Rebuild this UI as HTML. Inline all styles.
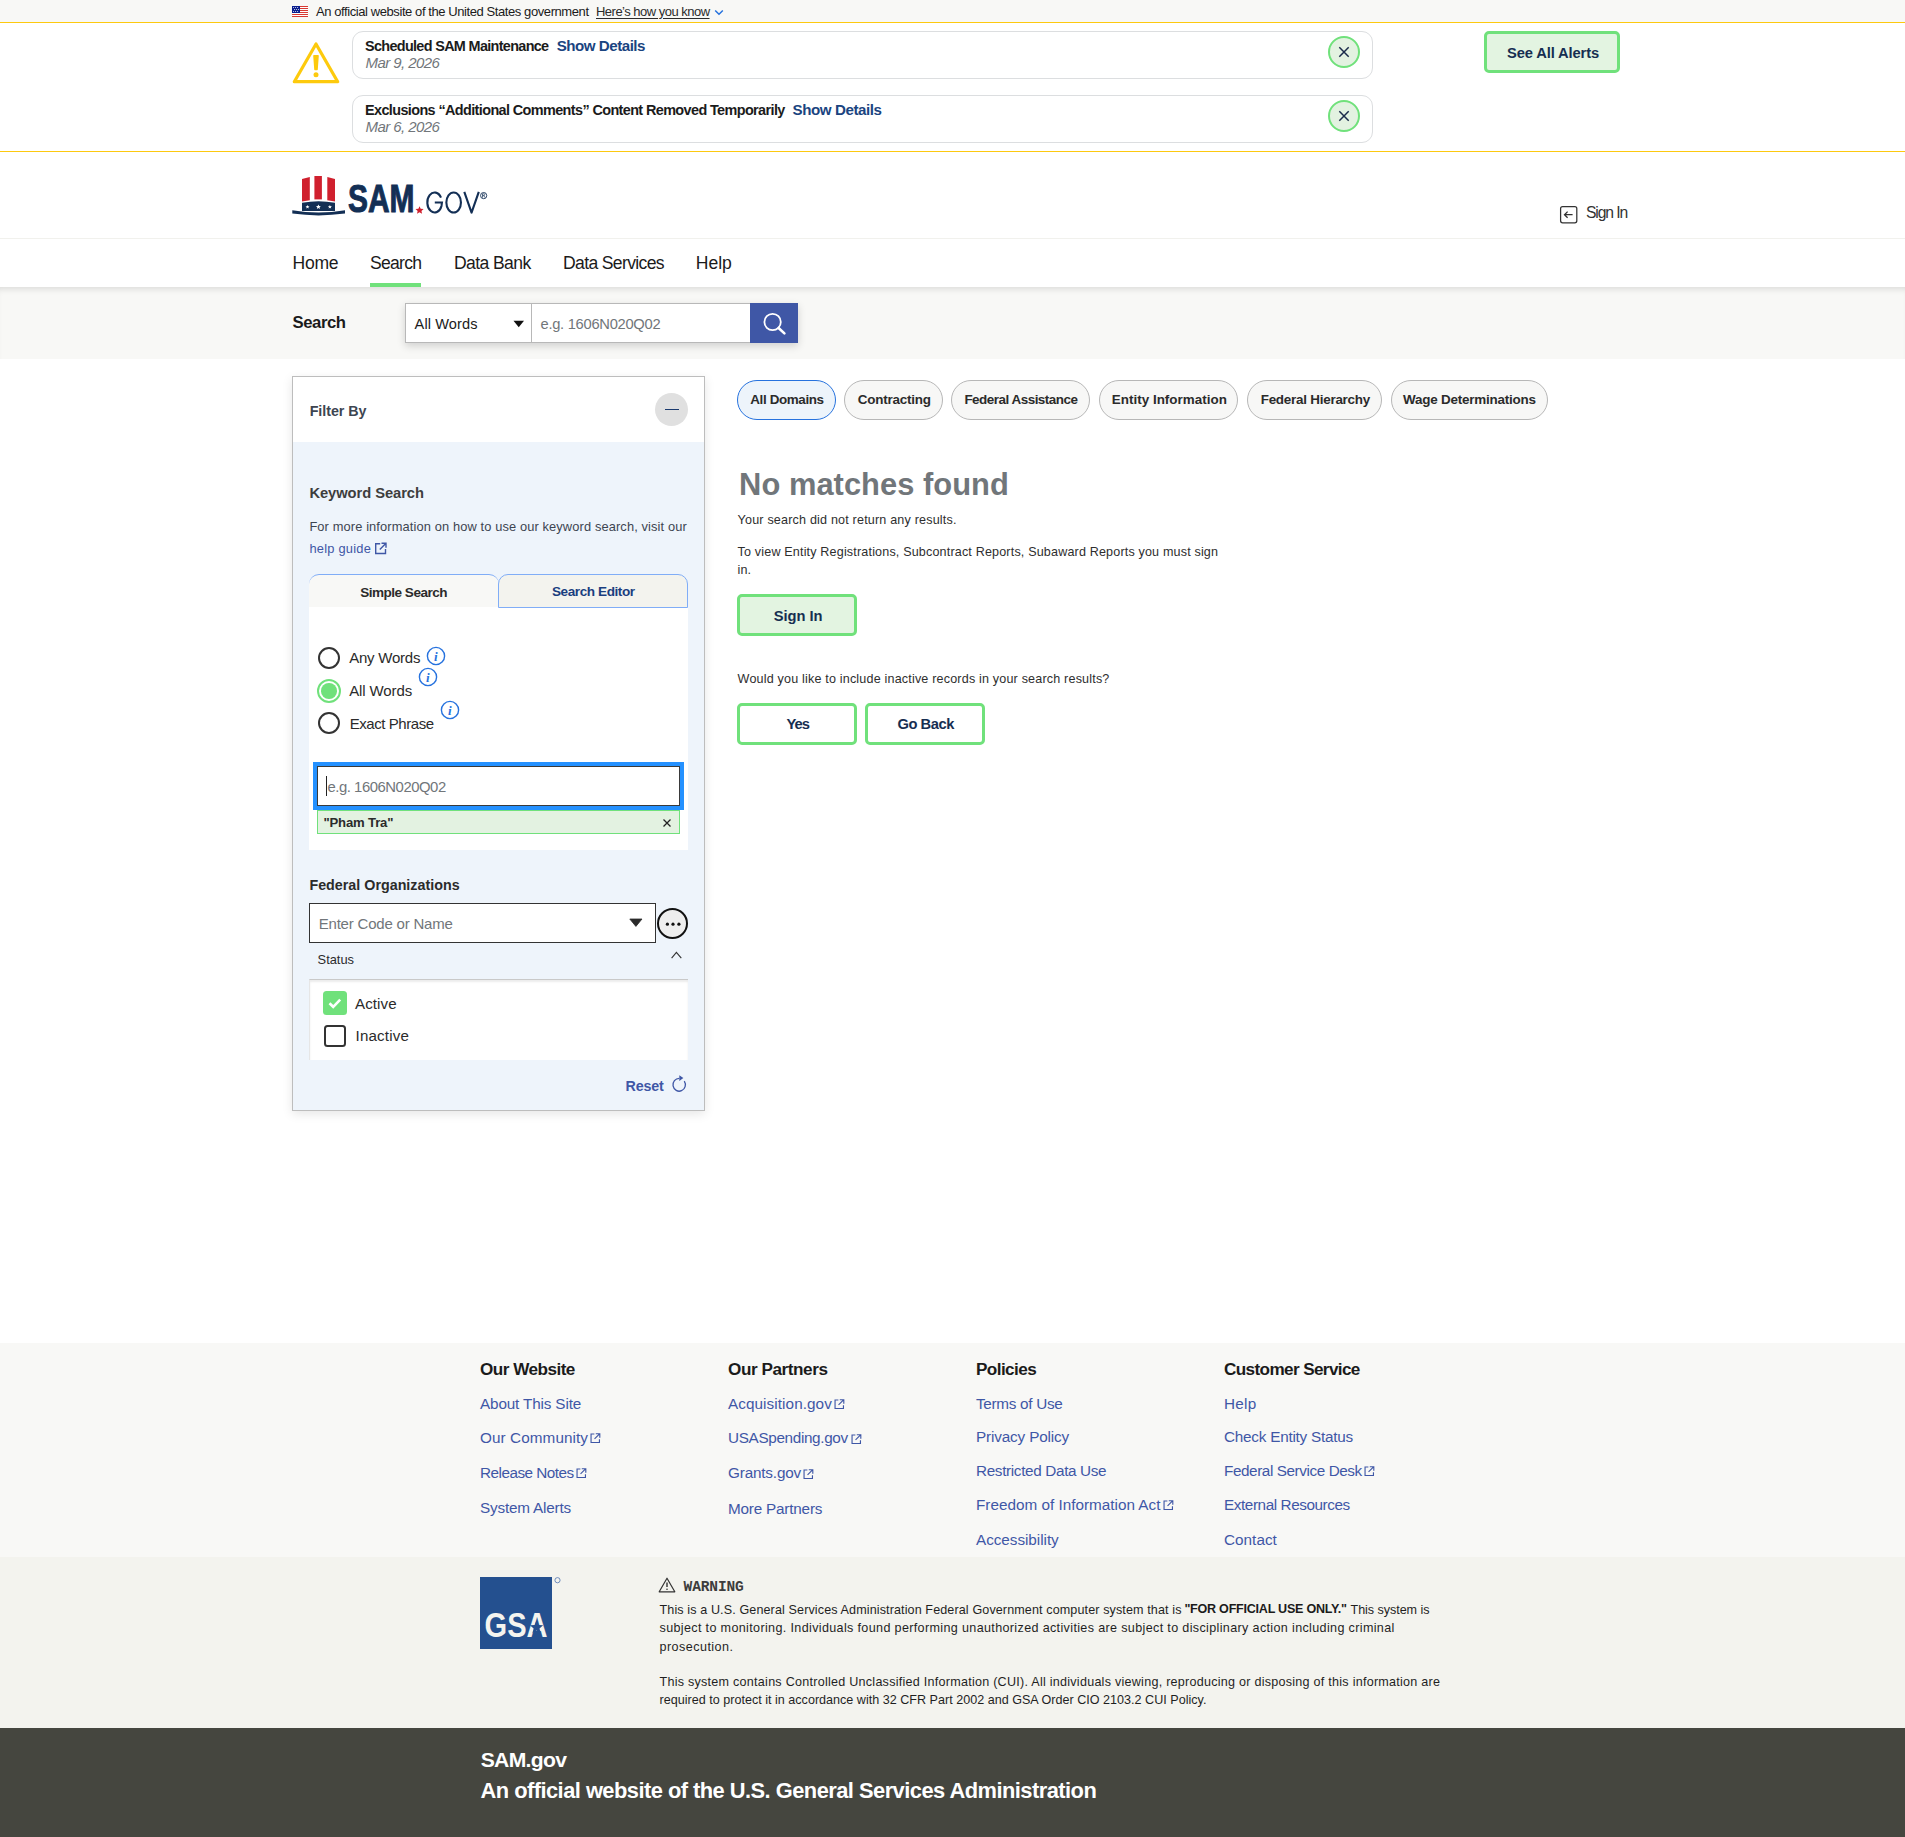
<!DOCTYPE html>
<html lang="en"><head><meta charset="utf-8"><title>Search | SAM.gov</title>
<style>
html,body{margin:0;padding:0;}
body{width:1905px;height:1837px;position:relative;overflow:hidden;background:#fff;font-family:"Liberation Sans", sans-serif;}
.a{position:absolute;box-sizing:border-box;}
.tx{position:absolute;white-space:nowrap;line-height:1;}
svg{position:absolute;overflow:visible;}
</style></head><body>
<!-- gov banner -->
<div class="a" style="left:0;top:0;width:1905px;height:22px;background:#f8f8f6;"></div>
<svg style="left:292px;top:6px" width="16" height="11" viewBox="0 0 16 11">
<rect width="16" height="11" fill="#fff"/>
<g fill="#d83933"><rect y="0" width="16" height="1"/><rect y="2" width="16" height="1"/><rect y="4" width="16" height="1"/><rect y="6" width="16" height="1"/><rect y="8" width="16" height="1"/><rect y="10" width="16" height="1"/></g>
<rect width="8" height="7" fill="#0b1f8f"/>
<g fill="#fff"><circle cx="1.6" cy="1.4" r=".5"/><circle cx="3.6" cy="1.4" r=".5"/><circle cx="5.6" cy="1.4" r=".5"/><circle cx="2.6" cy="3.4" r=".5"/><circle cx="4.6" cy="3.4" r=".5"/><circle cx="6.6" cy="3.4" r=".5"/><circle cx="1.6" cy="5.4" r=".5"/><circle cx="3.6" cy="5.4" r=".5"/><circle cx="5.6" cy="5.4" r=".5"/></g>
</svg>
<svg style="left:714px;top:9px" width="10" height="7" viewBox="0 0 10 7"><path d="M1.2 1.5 L5 5.2 L8.8 1.5" fill="none" stroke="#2672de" stroke-width="1.5"/></svg>
<!-- alerts -->
<div class="a" style="left:0;top:22px;width:1905px;height:1px;background:#fdc90f;"></div>
<div class="a" style="left:0;top:151px;width:1905px;height:1px;background:#fdc90f;"></div>
<svg style="left:292px;top:41px" width="48" height="44" viewBox="0 0 48 44">
<path d="M24 3 L45.7 40.7 L2.3 40.7 Z" fill="none" stroke="#fdca0d" stroke-width="3.2" stroke-linejoin="round"/>
<path d="M22 14.8 L26 14.8 L25 28.5 L23 28.5 Z" fill="#fdca0d" stroke="#fdca0d" stroke-width="1.6" stroke-linejoin="round"/>
<circle cx="24" cy="33.8" r="2.5" fill="#fdca0d"/>
</svg>
<div class="a" style="left:352px;top:31px;width:1021px;height:48px;border:1px solid #dcdee0;border-radius:11px;background:#fff;"></div>
<div class="a" style="left:352px;top:95px;width:1021px;height:48px;border:1px solid #dcdee0;border-radius:11px;background:#fff;"></div>
<div class="a" style="left:1328px;top:36px;width:32px;height:32px;border:2px solid #70e17b;border-radius:50%;background:#e3f2e1;"></div>
<div class="a" style="left:1328px;top:100px;width:32px;height:32px;border:2px solid #70e17b;border-radius:50%;background:#e3f2e1;"></div>
<svg style="left:1338px;top:46px" width="12" height="12" viewBox="0 0 12 12"><path d="M1.3 1.3 L10.7 10.7 M10.7 1.3 L1.3 10.7" stroke="#1b2b4b" stroke-width="1.5"/></svg>
<svg style="left:1338px;top:110px" width="12" height="12" viewBox="0 0 12 12"><path d="M1.3 1.3 L10.7 10.7 M10.7 1.3 L1.3 10.7" stroke="#1b2b4b" stroke-width="1.5"/></svg>
<div class="a" style="left:1484px;top:31px;width:136px;height:42px;border:3px solid #70e17b;border-radius:5px;background:#e3f4e1;"></div>
<!-- header / logo -->
<svg style="left:292px;top:175px" width="200" height="44" viewBox="0 0 200 44">
<path d="M10 3.9 L17.8 1.9 L17.8 25.2 L10 26.6 Z" fill="#d0202e"/>
<path d="M22.4 1 L29.9 1 L29.9 24.4 L22.4 24.4 Z" fill="#d0202e"/>
<path d="M35.3 1.9 L43 3.9 L43 26.6 L35.3 25.2 Z" fill="#d0202e"/>
<path d="M10 27.8 Q26.5 24.6 43 27.8 L43 36.1 L10 36.1 Z" fill="#132f55"/>
<g fill="#fff"><path d="M15.5 29.9 l.6 1.3 1.4 .1 -1.1 .9 .35 1.4 -1.25 -.75 -1.25 .75 .35 -1.4 -1.1 -.9 1.4 -.1z"/>
<path d="M26.4 29.4 l.75 1.6 1.75 .15 -1.35 1.15 .42 1.7 -1.57 -.95 -1.55 .95 .42 -1.7 -1.35 -1.15 1.75 -.15z"/>
<path d="M37.9 29.9 l.6 1.3 1.4 .1 -1.1 .9 .35 1.4 -1.25 -.75 -1.25 .75 .35 -1.4 -1.1 -.9 1.4 -.1z"/></g>
<path d="M0.3 35.2 Q26.5 39.8 53 35.2 L53 38.6 Q26.5 42.2 0.3 38.6 Z" fill="#132f55"/>
<text x="56" y="37.4" font-family="Liberation Sans" font-weight="700" font-size="38.8" fill="#132f55" stroke="#132f55" stroke-width="1" textLength="66.5" lengthAdjust="spacingAndGlyphs">SAM</text>
<path d="M127.5 31.2 l1.2 2.6 2.9 .3 -2.15 1.9 .65 2.8 -2.6 -1.5 -2.5 1.5 .65 -2.8 -2.15 -1.9 2.9 -.3z" fill="#d0202e"/>
<g fill="none" stroke="#132f55" stroke-width="2.1">
<path d="M149.0 22.6 A7.3 10 0 1 0 149.5 30.9 L149.95 27.5 L142.8 27.5"/>
<ellipse cx="161.65" cy="27.45" rx="7.3" ry="10"/>
<path d="M172.3 16.8 L179.55 37.6 L186.8 16.8" stroke-linejoin="round"/>
</g>
<circle cx="191.65" cy="20.6" r="3.1" fill="none" stroke="#132f55" stroke-width="0.9"/>
<path d="M190.5 22.6 L190.5 18.8 L192.1 18.8 Q193.3 19.1 192.3 20.6 L190.7 20.6 M191.7 20.6 L193 22.6" fill="none" stroke="#132f55" stroke-width="0.7"/>
</svg>
<svg style="left:1559px;top:205px" width="20" height="20" viewBox="0 0 20 20">
<rect x="1.6" y="1.6" width="16.2" height="16.2" rx="2" fill="none" stroke="#333" stroke-width="1.25"/>
<path d="M13.6 9.7 L5.5 9.7 M8.6 6.6 L5.5 9.7 L8.6 12.8" fill="none" stroke="#333" stroke-width="1.3"/>
</svg>
<div class="a" style="left:0;top:238px;width:1905px;height:1px;background:#f1f1ed;"></div>
<!-- nav underline -->
<div class="a" style="left:370px;top:283px;width:51px;height:4px;background:#70e17b;"></div>
<!-- search bar -->
<div class="a" style="left:0;top:287px;width:1905px;height:72px;background:#f8f8f6;box-shadow:inset 0 6px 6px -4px rgba(0,0,0,.12);"></div>
<div class="a" style="left:405px;top:303px;width:393px;height:40px;box-shadow:0 3px 8px rgba(0,0,0,.16);"></div>
<div class="a" style="left:405px;top:303px;width:127px;height:40px;border:1px solid #b8b8b8;background:#fff;"></div>
<div class="a" style="left:531px;top:303px;width:220px;height:40px;border:1px solid #b8b8b8;background:#fff;"></div>
<svg style="left:513px;top:320px" width="12" height="8" viewBox="0 0 12 8"><path d="M0.5 0.8 L11 0.8 L5.75 7.2 Z" fill="#111"/></svg>
<div class="a" style="left:750px;top:303px;width:48px;height:40px;background:#3f57a6;"></div>
<svg style="left:760px;top:311px" width="28" height="26" viewBox="0 0 28 26">
<circle cx="12.6" cy="11" r="8.2" fill="none" stroke="#fff" stroke-width="1.8"/>
<path d="M18.6 17 L24.4 22.4" stroke="#fff" stroke-width="2.6" stroke-linecap="round"/>
</svg>
<!-- filter panel -->
<div class="a" style="left:292px;top:376px;width:413px;height:735px;border:1px solid #bdbdbd;background:#eef4fb;box-shadow:0 3px 10px rgba(0,0,0,.10);"></div>
<div class="a" style="left:293px;top:377px;width:411px;height:65px;background:#fff;"></div>
<div class="a" style="left:655px;top:393px;width:33px;height:33px;border-radius:50%;background:#e0e0e0;"></div>
<div class="a" style="left:665px;top:408.7px;width:14px;height:1.6px;background:#1a3a6e;"></div>
<svg style="left:374px;top:542px" width="14" height="13" viewBox="0 0 14 13">
<path d="M6.2 1.7 L1.7 1.7 L1.7 11.5 L11.5 11.5 L11.5 7" fill="none" stroke="#3f57a6" stroke-width="1.4"/>
<path d="M7.5 1.2 L12 1.2 L12 5.7 M12 1.2 L5.8 7.4" fill="none" stroke="#3f57a6" stroke-width="1.4"/>
</svg>
<!-- tabs -->
<div class="a" style="left:309px;top:607px;width:379px;height:243px;background:#fff;"></div>
<div class="a" style="left:309px;top:574px;width:190px;height:33px;border-top:1px solid #80adf7;border-radius:10px 10px 0 0;background:#f8f8f6;"></div>
<div class="a" style="left:498px;top:574px;width:190px;height:34px;border:1px solid #80adf7;border-radius:10px 10px 0 0;background:#f3f3ee;"></div>
<!-- radios -->
<div class="a" style="left:318px;top:647px;width:22px;height:22px;border:2px solid #333;border-radius:50%;background:#fff;"></div>
<div class="a" style="left:317px;top:679px;width:24px;height:24px;border:2.5px solid #70e17b;border-radius:50%;background:#fff;"></div>
<div class="a" style="left:321.2px;top:683.2px;width:15.6px;height:15.6px;border-radius:50%;background:#70e17b;"></div>
<div class="a" style="left:318px;top:712px;width:22px;height:22px;border:2px solid #333;border-radius:50%;background:#fff;"></div>
<svg style="left:426px;top:646px" width="20" height="20" viewBox="0 0 20 20"><circle cx="10" cy="10" r="8.6" fill="none" stroke="#2672de" stroke-width="1.4"/><text x="8" y="15" font-family="Liberation Serif" font-style="italic" font-weight="700" font-size="13" fill="#2672de">i</text></svg>
<svg style="left:418px;top:667px" width="20" height="20" viewBox="0 0 20 20"><circle cx="10" cy="10" r="8.6" fill="none" stroke="#2672de" stroke-width="1.4"/><text x="8" y="15" font-family="Liberation Serif" font-style="italic" font-weight="700" font-size="13" fill="#2672de">i</text></svg>
<svg style="left:440px;top:700px" width="20" height="20" viewBox="0 0 20 20"><circle cx="10" cy="10" r="8.6" fill="none" stroke="#2672de" stroke-width="1.4"/><text x="8" y="15" font-family="Liberation Serif" font-style="italic" font-weight="700" font-size="13" fill="#2672de">i</text></svg>
<!-- keyword input -->
<div class="a" style="left:313px;top:762px;width:371px;height:48px;background:#2491ff;"></div>
<div class="a" style="left:317px;top:766px;width:363px;height:40px;border:1.3px solid #3a3a3a;background:#fff;"></div>
<div class="a" style="left:326px;top:776px;width:1px;height:20px;background:#222;"></div>
<div class="a" style="left:317px;top:810px;width:363px;height:24px;border:1px solid #70e17b;background:#e3f2e1;"></div>
<svg style="left:662px;top:818px" width="10" height="10" viewBox="0 0 10 10"><path d="M1.5 1.5 L8.5 8.5 M8.5 1.5 L1.5 8.5" stroke="#222" stroke-width="1.3"/></svg>
<!-- federal org -->
<div class="a" style="left:309px;top:903px;width:347px;height:40px;border:1.3px solid #333;background:#fff;"></div>
<svg style="left:629px;top:918px" width="14" height="9" viewBox="0 0 14 9"><path d="M0.8 1 L13 1 L6.9 8.4 Z" fill="#2b2b2b" stroke="#2b2b2b" stroke-width="0.8" stroke-linejoin="round"/></svg>
<div class="a" style="left:657px;top:907.5px;width:31px;height:31px;border:2px solid #111;border-radius:50%;background:#eee;"></div>
<svg style="left:664px;top:921px" width="18" height="6" viewBox="0 0 18 6"><circle cx="3.4" cy="3.2" r="1.6" fill="#111"/><circle cx="9" cy="3.2" r="1.6" fill="#111"/><circle cx="14.9" cy="3.2" r="1.6" fill="#111"/></svg>
<svg style="left:670px;top:950px" width="13" height="10" viewBox="0 0 13 10"><path d="M1.6 8.2 L6.4 2.4 L11.3 8.2" fill="none" stroke="#333" stroke-width="1.1"/></svg>
<!-- status box -->
<div class="a" style="left:309px;top:979px;width:379px;height:81px;background:#fff;border-top:1px solid #c9c9c9;border-left:1px solid #e6e6e6;box-shadow:inset 0 2px 2px rgba(0,0,0,.08);"></div>
<div class="a" style="left:323px;top:991px;width:24px;height:24px;border-radius:3.5px;background:#70e17b;"></div>
<svg style="left:323px;top:991px" width="24" height="24" viewBox="0 0 24 24"><path d="M6.5 12.3 L10.2 15.8 L17.2 8.6" fill="none" stroke="#fff" stroke-width="2.6"/></svg>
<div class="a" style="left:324px;top:1025px;width:22px;height:22px;border:2px solid #333;border-radius:3.5px;background:#fff;"></div>
<svg style="left:671px;top:1074px" width="18" height="19" viewBox="0 0 18 19">
<path d="M13.3 7.2 A6.2 6.4 0 1 1 8.3 4.4" fill="none" stroke="#3f57a6" stroke-width="1.3"/>
<path d="M8.3 1.2 L12.4 4.1 L8.3 7 Z" fill="#3f57a6"/>
</svg>
<!-- domain chips -->
<div class="a" style="left:737px;top:380px;width:99px;height:40px;border:1.5px solid #2672de;border-radius:20px;background:#edf4fb;"></div>
<div class="a" style="left:844px;top:380px;width:99px;height:40px;border:1px solid #b7b7b7;border-radius:20px;background:#f7f7f6;"></div>
<div class="a" style="left:951px;top:380px;width:139px;height:40px;border:1px solid #b7b7b7;border-radius:20px;background:#f7f7f6;"></div>
<div class="a" style="left:1099px;top:380px;width:139px;height:40px;border:1px solid #b7b7b7;border-radius:20px;background:#f7f7f6;"></div>
<div class="a" style="left:1247px;top:380px;width:135px;height:40px;border:1px solid #b7b7b7;border-radius:20px;background:#f7f7f6;"></div>
<div class="a" style="left:1391px;top:380px;width:157px;height:40px;border:1px solid #b7b7b7;border-radius:20px;background:#f7f7f6;"></div>
<!-- result buttons -->
<div class="a" style="left:737px;top:594px;width:120px;height:42px;border:3px solid #70e17b;border-radius:5px;background:#e3f4e1;"></div>
<div class="a" style="left:737px;top:703px;width:120px;height:42px;border:3px solid #70e17b;border-radius:5px;background:#fff;"></div>
<div class="a" style="left:865px;top:703px;width:120px;height:42px;border:3px solid #70e17b;border-radius:5px;background:#fff;"></div>
<!-- footer -->
<div class="a" style="left:0;top:1343px;width:1905px;height:214px;background:#f8f8f6;"></div>
<div class="a" style="left:0;top:1557px;width:1905px;height:171px;background:#f3f3ee;"></div>
<div class="a" style="left:0;top:1728px;width:1905px;height:109px;background:#45463f;"></div>
<svg style="left:590.2px;top:1432.7px" width="10.5" height="10.5" viewBox="0 0 12 12"><path d="M5 1.2 L1.2 1.2 L1.2 10.8 L10.8 10.8 L10.8 7" fill="none" stroke="#3f57a6" stroke-width="1.3"/><path d="M6.6 0.8 L11.2 0.8 L11.2 5.4 M11.2 0.8 L5.2 6.8" fill="none" stroke="#3f57a6" stroke-width="1.3"/></svg>
<svg style="left:576.2px;top:1467.7px" width="10.5" height="10.5" viewBox="0 0 12 12"><path d="M5 1.2 L1.2 1.2 L1.2 10.8 L10.8 10.8 L10.8 7" fill="none" stroke="#3f57a6" stroke-width="1.3"/><path d="M6.6 0.8 L11.2 0.8 L11.2 5.4 M11.2 0.8 L5.2 6.8" fill="none" stroke="#3f57a6" stroke-width="1.3"/></svg>
<svg style="left:834.2px;top:1398.7px" width="10.5" height="10.5" viewBox="0 0 12 12"><path d="M5 1.2 L1.2 1.2 L1.2 10.8 L10.8 10.8 L10.8 7" fill="none" stroke="#3f57a6" stroke-width="1.3"/><path d="M6.6 0.8 L11.2 0.8 L11.2 5.4 M11.2 0.8 L5.2 6.8" fill="none" stroke="#3f57a6" stroke-width="1.3"/></svg>
<svg style="left:850.7px;top:1433.7px" width="10.5" height="10.5" viewBox="0 0 12 12"><path d="M5 1.2 L1.2 1.2 L1.2 10.8 L10.8 10.8 L10.8 7" fill="none" stroke="#3f57a6" stroke-width="1.3"/><path d="M6.6 0.8 L11.2 0.8 L11.2 5.4 M11.2 0.8 L5.2 6.8" fill="none" stroke="#3f57a6" stroke-width="1.3"/></svg>
<svg style="left:803.2px;top:1468.7px" width="10.5" height="10.5" viewBox="0 0 12 12"><path d="M5 1.2 L1.2 1.2 L1.2 10.8 L10.8 10.8 L10.8 7" fill="none" stroke="#3f57a6" stroke-width="1.3"/><path d="M6.6 0.8 L11.2 0.8 L11.2 5.4 M11.2 0.8 L5.2 6.8" fill="none" stroke="#3f57a6" stroke-width="1.3"/></svg>
<svg style="left:1162.7px;top:1499.7px" width="10.5" height="10.5" viewBox="0 0 12 12"><path d="M5 1.2 L1.2 1.2 L1.2 10.8 L10.8 10.8 L10.8 7" fill="none" stroke="#3f57a6" stroke-width="1.3"/><path d="M6.6 0.8 L11.2 0.8 L11.2 5.4 M11.2 0.8 L5.2 6.8" fill="none" stroke="#3f57a6" stroke-width="1.3"/></svg>
<svg style="left:1364.2px;top:1465.7px" width="10.5" height="10.5" viewBox="0 0 12 12"><path d="M5 1.2 L1.2 1.2 L1.2 10.8 L10.8 10.8 L10.8 7" fill="none" stroke="#3f57a6" stroke-width="1.3"/><path d="M6.6 0.8 L11.2 0.8 L11.2 5.4 M11.2 0.8 L5.2 6.8" fill="none" stroke="#3f57a6" stroke-width="1.3"/></svg>
<!-- GSA logo -->
<div class="a" style="left:480px;top:1577px;width:72px;height:72px;background:#24508f;"></div>
<svg style="left:480px;top:1577px" width="84" height="72" viewBox="0 0 84 72">
<text x="4.6" y="60" font-family="Liberation Sans" font-weight="700" font-size="35" fill="#f4f4ef" textLength="63" lengthAdjust="spacingAndGlyphs">GSA</text>
<path d="M56.5 43.6 l1.9 4.3 4.7 .4 -3.6 3.1 1.1 4.6 -4.1 -2.5 -4 2.5 1.1 -4.6 -3.6 -3.1 4.6 -.4z" fill="#24508f"/>
<circle cx="77.5" cy="3.2" r="2.6" fill="none" stroke="#5f7fb5" stroke-width=".9"/>
</svg>
<svg style="left:658px;top:1577px" width="18" height="16" viewBox="0 0 18 16">
<path d="M9 1.2 L16.8 14.8 L1.2 14.8 Z" fill="none" stroke="#333" stroke-width="1.2" stroke-linejoin="round"/>
<path d="M9 5.6 L9 10" stroke="#333" stroke-width="1.4"/><circle cx="9" cy="12.3" r=".8" fill="#333"/>
</svg>

<span id="t0" class="tx" style="left:316.0px;top:4.60px;font-size:13.00px;color:#1b1b1b;letter-spacing:-0.417px;">An official website of the United States government</span>
<span id="t1" class="tx" style="left:596.0px;top:4.60px;font-size:13.00px;color:#2b2b2b;letter-spacing:-0.516px;text-decoration:underline;text-underline-offset:1.5px;">Here’s how you know</span>
<span id="t2" class="tx" style="left:365.0px;top:38.99px;font-size:14.43px;font-weight:700;color:#1b1b1b;letter-spacing:-0.675px;">Scheduled SAM Maintenance</span>
<span id="t3" class="tx" style="left:556.7px;top:38.38px;font-size:15.14px;font-weight:700;color:#1a4480;letter-spacing:-0.484px;">Show Details</span>
<span id="t4" class="tx" style="left:365.5px;top:55.30px;font-size:15.00px;color:#71767a;letter-spacing:-0.575px;font-style:italic;">Mar 9, 2026</span>
<span id="t5" class="tx" style="left:365.0px;top:102.99px;font-size:14.43px;font-weight:700;color:#1b1b1b;letter-spacing:-0.613px;">Exclusions “Additional Comments” Content Removed Temporarily</span>
<span id="t6" class="tx" style="left:792.5px;top:102.38px;font-size:15.14px;font-weight:700;color:#1a4480;letter-spacing:-0.421px;">Show Details</span>
<span id="t7" class="tx" style="left:365.5px;top:119.30px;font-size:15.00px;color:#71767a;letter-spacing:-0.575px;font-style:italic;">Mar 6, 2026</span>
<span id="t8" class="tx" style="left:1507.0px;top:45.75px;font-size:14.71px;font-weight:700;color:#162e51;letter-spacing:-0.118px;">See All Alerts</span>
<span id="t9" class="tx" style="left:1586.0px;top:205.30px;font-size:15.71px;color:#333;letter-spacing:-1.107px;">Sign In</span>
<span id="t10" class="tx" style="left:292.6px;top:255.33px;font-size:17.57px;color:#1b1b1b;letter-spacing:-0.286px;">Home</span>
<span id="t11" class="tx" style="left:370.0px;top:255.33px;font-size:17.57px;color:#1b1b1b;letter-spacing:-0.709px;">Search</span>
<span id="t12" class="tx" style="left:453.9px;top:255.33px;font-size:17.57px;color:#1b1b1b;letter-spacing:-0.589px;">Data Bank</span>
<span id="t13" class="tx" style="left:563.0px;top:255.33px;font-size:17.57px;color:#1b1b1b;letter-spacing:-0.644px;">Data Services</span>
<span id="t14" class="tx" style="left:695.8px;top:255.33px;font-size:17.57px;color:#1b1b1b;letter-spacing:-0.040px;">Help</span>
<span id="t15" class="tx" style="left:292.5px;top:314.55px;font-size:16.71px;font-weight:700;color:#1b1b1b;letter-spacing:-0.427px;">Search</span>
<span id="t16" class="tx" style="left:414.6px;top:317.37px;font-size:14.57px;color:#1b1b1b;letter-spacing:0.102px;">All Words</span>
<span id="t17" class="tx" style="left:540.5px;top:317.35px;font-size:14.71px;color:#71767a;letter-spacing:-0.279px;">e.g. 1606N020Q02</span>
<span id="t18" class="tx" style="left:309.7px;top:404.10px;font-size:14.29px;font-weight:600;color:#3d4551;letter-spacing:-0.050px;">Filter By</span>
<span id="t19" class="tx" style="left:309.4px;top:485.75px;font-size:14.71px;font-weight:700;color:#3d3d3d;letter-spacing:-0.050px;">Keyword Search</span>
<span id="t20" class="tx" style="left:309.4px;top:521.01px;font-size:12.86px;color:#3d4551;letter-spacing:0.113px;">For more information on how to use our keyword search, visit our</span>
<span id="t21" class="tx" style="left:309.4px;top:543.01px;font-size:12.86px;color:#3f57a6;letter-spacing:0.230px;">help guide</span>
<span id="t22" class="tx" style="left:360.3px;top:585.71px;font-size:13.57px;font-weight:700;color:#2b2b2b;letter-spacing:-0.525px;">Simple Search</span>
<span id="t23" class="tx" style="left:552.0px;top:584.71px;font-size:13.57px;font-weight:700;color:#1a3e7f;letter-spacing:-0.426px;">Search Editor</span>
<span id="t24" class="tx" style="left:349.2px;top:650.00px;font-size:15.00px;color:#2b2b2b;letter-spacing:-0.224px;">Any Words</span>
<span id="t25" class="tx" style="left:349.2px;top:683.00px;font-size:15.00px;color:#2b2b2b;letter-spacing:-0.113px;">All Words</span>
<span id="t26" class="tx" style="left:349.7px;top:716.00px;font-size:15.00px;color:#2b2b2b;letter-spacing:-0.429px;">Exact Phrase</span>
<span id="t27" class="tx" style="left:327.5px;top:780.22px;font-size:14.86px;color:#71767a;letter-spacing:-0.460px;">e.g. 1606N020Q02</span>
<span id="t28" class="tx" style="left:323.5px;top:815.58px;font-size:13.14px;font-weight:700;color:#2b2b2b;letter-spacing:-0.177px;">"Pham Tra"</span>
<span id="t29" class="tx" style="left:309.4px;top:878.10px;font-size:14.29px;font-weight:700;color:#2b2b2b;letter-spacing:0.012px;">Federal Organizations</span>
<span id="t30" class="tx" style="left:318.7px;top:916.00px;font-size:15.00px;color:#71767a;letter-spacing:-0.198px;">Enter Code or Name</span>
<span id="t31" class="tx" style="left:317.6px;top:953.71px;font-size:12.86px;color:#2b2b2b;letter-spacing:-0.008px;">Status</span>
<span id="t32" class="tx" style="left:355.0px;top:995.88px;font-size:15.14px;color:#2b2b2b;letter-spacing:0.083px;">Active</span>
<span id="t33" class="tx" style="left:355.6px;top:1028.08px;font-size:15.14px;color:#2b2b2b;letter-spacing:0.155px;">Inactive</span>
<span id="t34" class="tx" style="left:625.5px;top:1079.10px;font-size:14.29px;font-weight:600;color:#3f57a6;letter-spacing:-0.141px;">Reset</span>
<span id="t35" class="tx" style="left:750.3px;top:393.33px;font-size:13.43px;font-weight:700;color:#2b2b2b;letter-spacing:-0.380px;">All Domains</span>
<span id="t36" class="tx" style="left:857.8px;top:393.33px;font-size:13.43px;font-weight:700;color:#2b2b2b;letter-spacing:-0.214px;">Contracting</span>
<span id="t37" class="tx" style="left:964.4px;top:393.33px;font-size:13.43px;font-weight:700;color:#2b2b2b;letter-spacing:-0.487px;">Federal Assistance</span>
<span id="t38" class="tx" style="left:1111.7px;top:393.33px;font-size:13.43px;font-weight:700;color:#2b2b2b;letter-spacing:0.026px;">Entity Information</span>
<span id="t39" class="tx" style="left:1260.7px;top:393.33px;font-size:13.43px;font-weight:700;color:#2b2b2b;letter-spacing:-0.240px;">Federal Hierarchy</span>
<span id="t40" class="tx" style="left:1403.1px;top:393.33px;font-size:13.43px;font-weight:700;color:#2b2b2b;letter-spacing:-0.209px;">Wage Determinations</span>
<span id="t41" class="tx" style="left:739.1px;top:470.08px;font-size:30.86px;font-weight:700;color:#71767a;letter-spacing:0.039px;">No matches found</span>
<span id="t42" class="tx" style="left:737.6px;top:514.36px;font-size:12.57px;color:#2e2e2e;letter-spacing:0.186px;">Your search did not return any results.</span>
<span id="t43" class="tx" style="left:737.6px;top:545.86px;font-size:12.57px;color:#2e2e2e;letter-spacing:0.166px;">To view Entity Registrations, Subcontract Reports, Subaward Reports you must sign</span>
<span id="t44" class="tx" style="left:737.6px;top:563.96px;font-size:12.57px;color:#2e2e2e;letter-spacing:0.063px;">in.</span>
<span id="t45" class="tx" style="left:773.7px;top:608.85px;font-size:14.71px;font-weight:700;color:#162e51;letter-spacing:-0.024px;">Sign In</span>
<span id="t46" class="tx" style="left:737.6px;top:672.56px;font-size:12.57px;color:#2e2e2e;letter-spacing:0.180px;">Would you like to include inactive records in your search results?</span>
<span id="t47" class="tx" style="left:786.4px;top:717.35px;font-size:14.71px;font-weight:700;color:#162e51;letter-spacing:-0.942px;">Yes</span>
<span id="t48" class="tx" style="left:897.5px;top:717.35px;font-size:14.71px;font-weight:700;color:#162e51;letter-spacing:-0.463px;">Go Back</span>
<span id="t49" class="tx" style="left:480.0px;top:1360.69px;font-size:17.14px;font-weight:700;color:#1b1b1b;letter-spacing:-0.519px;">Our Website</span>
<span id="t50" class="tx" style="left:728.0px;top:1360.69px;font-size:17.14px;font-weight:700;color:#1b1b1b;letter-spacing:-0.429px;">Our Partners</span>
<span id="t51" class="tx" style="left:976.0px;top:1360.69px;font-size:17.14px;font-weight:700;color:#1b1b1b;letter-spacing:-0.580px;">Policies</span>
<span id="t52" class="tx" style="left:1224.0px;top:1360.69px;font-size:17.14px;font-weight:700;color:#1b1b1b;letter-spacing:-0.618px;">Customer Service</span>
<span id="t53" class="tx" style="left:480.0px;top:1395.86px;font-size:15.29px;color:#3f57a6;letter-spacing:-0.152px;">About This Site</span>
<span id="t54" class="tx" style="left:480.0px;top:1429.66px;font-size:15.29px;color:#3f57a6;letter-spacing:0.085px;">Our Community</span>
<span id="t55" class="tx" style="left:480.0px;top:1464.86px;font-size:15.29px;color:#3f57a6;letter-spacing:-0.501px;">Release Notes</span>
<span id="t56" class="tx" style="left:480.0px;top:1499.66px;font-size:15.29px;color:#3f57a6;letter-spacing:-0.183px;">System Alerts</span>
<span id="t57" class="tx" style="left:728.0px;top:1395.86px;font-size:15.29px;color:#3f57a6;letter-spacing:0.073px;">Acquisition.gov</span>
<span id="t58" class="tx" style="left:728.0px;top:1430.46px;font-size:15.29px;color:#3f57a6;letter-spacing:-0.341px;">USASpending.gov</span>
<span id="t59" class="tx" style="left:728.0px;top:1465.06px;font-size:15.29px;color:#3f57a6;letter-spacing:-0.170px;">Grants.gov</span>
<span id="t60" class="tx" style="left:728.0px;top:1500.56px;font-size:15.29px;color:#3f57a6;letter-spacing:-0.200px;">More Partners</span>
<span id="t61" class="tx" style="left:976.0px;top:1395.86px;font-size:15.29px;color:#3f57a6;letter-spacing:-0.299px;">Terms of Use</span>
<span id="t62" class="tx" style="left:976.0px;top:1429.46px;font-size:15.29px;color:#3f57a6;letter-spacing:-0.145px;">Privacy Policy</span>
<span id="t63" class="tx" style="left:976.0px;top:1462.56px;font-size:15.29px;color:#3f57a6;letter-spacing:-0.340px;">Restricted Data Use</span>
<span id="t64" class="tx" style="left:976.0px;top:1496.86px;font-size:15.29px;color:#3f57a6;letter-spacing:0.004px;">Freedom of Information Act</span>
<span id="t65" class="tx" style="left:976.0px;top:1531.66px;font-size:15.29px;color:#3f57a6;letter-spacing:-0.041px;">Accessibility</span>
<span id="t66" class="tx" style="left:1224.0px;top:1395.86px;font-size:15.29px;color:#3f57a6;letter-spacing:0.262px;">Help</span>
<span id="t67" class="tx" style="left:1224.0px;top:1429.46px;font-size:15.29px;color:#3f57a6;letter-spacing:-0.230px;">Check Entity Status</span>
<span id="t68" class="tx" style="left:1224.0px;top:1462.56px;font-size:15.29px;color:#3f57a6;letter-spacing:-0.413px;">Federal Service Desk</span>
<span id="t69" class="tx" style="left:1224.0px;top:1496.86px;font-size:15.29px;color:#3f57a6;letter-spacing:-0.420px;">External Resources</span>
<span id="t70" class="tx" style="left:1224.0px;top:1531.66px;font-size:15.29px;color:#3f57a6;letter-spacing:0.026px;">Contact</span>
<span id="t71" class="tx" style="left:683.6px;top:1579.84px;font-size:14.57px;font-weight:700;font-family:'Liberation Mono', monospace;color:#3d3d3d;letter-spacing:-0.152px;">WARNING</span>
<span id="t72" class="tx" style="left:659.5px;top:1604.26px;font-size:12.57px;color:#1f1f1f;letter-spacing:0.116px;">This is a U.S. General Services Administration Federal Government computer system that is</span>
<span id="t73" class="tx" style="left:1184.4px;top:1603.26px;font-size:12.57px;font-weight:700;color:#1b1b1b;letter-spacing:-0.246px;">"FOR OFFICIAL USE ONLY."</span>
<span id="t74" class="tx" style="left:1350.5px;top:1604.26px;font-size:12.57px;color:#1f1f1f;letter-spacing:-0.044px;">This system is</span>
<span id="t75" class="tx" style="left:659.5px;top:1622.36px;font-size:12.57px;color:#1f1f1f;letter-spacing:0.351px;">subject to monitoring. Individuals found performing unauthorized activities are subject to disciplinary action including criminal</span>
<span id="t76" class="tx" style="left:659.5px;top:1640.56px;font-size:12.57px;color:#1f1f1f;letter-spacing:0.460px;">prosecution.</span>
<span id="t77" class="tx" style="left:659.5px;top:1675.96px;font-size:12.57px;color:#1f1f1f;letter-spacing:0.256px;">This system contains Controlled Unclassified Information (CUI). All individuals viewing, reproducing or disposing of this information are</span>
<span id="t78" class="tx" style="left:659.5px;top:1694.06px;font-size:12.57px;color:#1f1f1f;letter-spacing:0.012px;">required to protect it in accordance with 32 CFR Part 2002 and GSA Order CIO 2103.2 CUI Policy.</span>
<span id="t79" class="tx" style="left:480.7px;top:1749.10px;font-size:21.14px;font-weight:600;color:#ffffff;letter-spacing:-0.697px;">SAM.gov</span>
<span id="t80" class="tx" style="left:480.5px;top:1780.20px;font-size:21.86px;font-weight:600;color:#ffffff;letter-spacing:-0.529px;">An official website of the U.S. General Services Administration</span>
</body></html>
